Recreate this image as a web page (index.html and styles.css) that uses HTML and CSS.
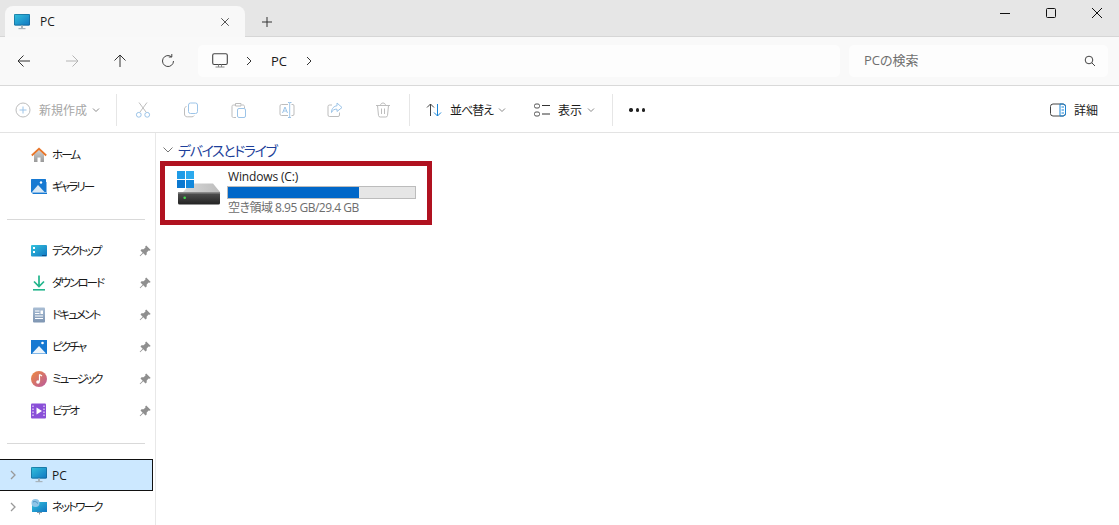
FILE: index.html
```html
<!DOCTYPE html>
<html lang="ja">
<head>
<meta charset="utf-8">
<title>PC</title>
<link rel="stylesheet" href="styles.css">
</head>
<body>
<svg class="defs" width="0" height="0" aria-hidden="true">
  <defs>
    <linearGradient id="scr" x1="0" y1="0" x2="1" y2="1"><stop offset="0" stop-color="#35c3dc"/><stop offset="1" stop-color="#0f75c2"/></linearGradient>
    <linearGradient id="drv" x1="0" y1="0" x2="0" y2="1"><stop offset="0" stop-color="#555"/><stop offset="1" stop-color="#222"/></linearGradient>
    <linearGradient id="drt" x1="0" y1="0" x2="1" y2="0"><stop offset="0" stop-color="#d8d8d8"/><stop offset="1" stop-color="#bdbdbd"/></linearGradient>
    <linearGradient id="mus" x1="0" y1="0" x2="1" y2="1"><stop offset="0" stop-color="#f08a3c"/><stop offset="1" stop-color="#b85aa0"/></linearGradient>
    <linearGradient id="hom" x1="0" y1="0" x2="0" y2="1"><stop offset="0" stop-color="#cfcfcf"/><stop offset="1" stop-color="#9a9a9a"/></linearGradient>
    <linearGradient id="doc" x1="0" y1="0" x2="0" y2="1"><stop offset="0" stop-color="#a9bdd4"/><stop offset="1" stop-color="#7e95b2"/></linearGradient>
    <symbol id="pc" viewBox="0 0 16 16"><rect x="0" y="0" width="16" height="11.5" rx="1" fill="url(#scr)"/><rect x="0.4" y="0.4" width="15.2" height="10.7" rx="1" fill="none" stroke="#15638f" stroke-width=".7"/><rect x="7" y="11.5" width="2" height="2.5" fill="#a8b4bc"/><rect x="4.5" y="14" width="7" height="1.2" fill="#a8b4bc"/></symbol>
    <symbol id="pin" viewBox="0 0 12 12"><path d="M7.2 .5 11.700 5 10.500 5.800 9.600 5.500 7.700 7.400 7.700 9.500 6.500 10.500 4.300 8.300 1.200 11.300.7 10.800 3.700 7.700 1.500 5.500 2.500 4.300 4.600 4.300 6.500 2.400 6.200 1.500Z" fill="#8f8f8f"/></symbol>
    <symbol id="chev" viewBox="0 0 8 8"><path d="M1 2.500 4 5.500 7 2.500" fill="none" stroke="currentColor" stroke-width="1"/></symbol>
  </defs>
</svg>
<div class="window">
  <header class="titlebar">
    <div class="tab">
      <svg class="i16" viewBox="0 0 16 16"><use href="#pc"/></svg>
      <span class="tab-label">PC</span>
      <svg class="tab-close" viewBox="0 0 12 12"><path d="M1.500 1.500 10.500 10.500M10.500 1.500 1.500 10.500" stroke="#333" fill="none"/></svg>
    </div>
    <div class="newtab"><svg class="i12" viewBox="0 0 12 12"><path d="M6 1V11M1 6H11" stroke="#333" fill="none"/></svg></div>
    <div class="winctl">
      <div class="winbtn"><svg class="i12" viewBox="0 0 12 12"><path d="M1 6.500H11" stroke="#111" fill="none"/></svg></div>
      <div class="winbtn"><svg class="i12" viewBox="0 0 12 12"><rect x="1.500" y="1.500" width="9" height="9" rx="1" stroke="#111" fill="none"/></svg></div>
      <div class="winbtn"><svg class="i12" viewBox="0 0 12 12"><path d="M1 1 11 11M11 1 1 11" stroke="#111" fill="none"/></svg></div>
    </div>
  </header>

  <nav class="navbar">
    <div class="navbtn"><svg class="i16" viewBox="0 0 16 16"><path d="M14 8H2M7.500 2.500 2 8l5.500 5.500" stroke="#333" fill="none"/></svg></div>
    <div class="navbtn"><svg class="i16" viewBox="0 0 16 16"><path d="M2 8H14M8.500 2.500 14 8l-5.500 5.500" stroke="#b5b5b5" fill="none"/></svg></div>
    <div class="navbtn"><svg class="i16" viewBox="0 0 16 16"><path d="M8 14V2M2.500 7.500 8 2l5.500 5.500" stroke="#333" fill="none"/></svg></div>
    <div class="navbtn"><svg class="i16" viewBox="0 0 16 16"><path d="M13.500 8A5.500 5.500 0 1 1 11.500 3.800M11.800 1v3h-3" stroke="#444" fill="none"/></svg></div>
    <div class="address">
      <svg class="addr-pc" viewBox="0 0 16 16"><rect x=".7" y=".7" width="14.600" height="10.800" rx="1.500" stroke="#444" fill="none" stroke-width="1.100"/><path d="M3.500 14H12.500M6.500 11.500V14M9.500 11.500V14" stroke="#888" fill="none"/></svg>
      <svg class="crumb first" viewBox="0 0 6 10"><path d="M1 1 5 5 1 9" stroke="#333" fill="none"/></svg>
      <span class="addr-text">PC</span>
      <svg class="crumb" viewBox="0 0 6 10"><path d="M1 1 5 5 1 9" stroke="#333" fill="none"/></svg>
    </div>
    <div class="search">
      <span class="search-text">PCの検索</span>
      <svg class="i12" viewBox="0 0 12 12"><circle cx="5" cy="5" r="3.800" stroke="#444" fill="none"/><path d="M7.800 7.800 11 11" stroke="#444" fill="none"/></svg>
    </div>
  </nav>

  <div class="toolbar">
    <div class="tb-new">
      <svg class="i16" viewBox="0 0 16 16"><circle cx="8" cy="8" r="7" stroke="#bdbdbd" fill="none"/><path d="M8 4.500V11.500M4.500 8H11.500" stroke="#9cc4e8" fill="none"/></svg>
      <span class="tb-label dim">新規作成</span>
      <svg class="chev dim" viewBox="0 0 8 8"><use href="#chev"/></svg>
    </div>
    <div class="sep first"></div>
    <div class="tb-icon"><svg class="i16" viewBox="0 0 16 16"><path d="M4 .5 11 10M12 .5 5 10" stroke="#bdbdbd" fill="none"/><circle cx="3.800" cy="12.800" r="2.400" stroke="#9cc4e8" fill="none"/><circle cx="12.200" cy="12.800" r="2.400" stroke="#9cc4e8" fill="none"/></svg></div>
    <div class="tb-icon"><svg class="i16" viewBox="0 0 16 16"><rect x="5.500" y="1" width="9" height="10.500" rx="2" stroke="#9cc4e8" fill="none"/><path d="M3.500 4.500C2 5 1.500 5.800 1.500 7v5c0 1.800 1 2.800 2.800 2.800H9c1 0 1.800-.5 2.200-1.300" stroke="#bdbdbd" fill="none"/></svg></div>
    <div class="tb-icon"><svg class="i16" viewBox="0 0 16 16"><path d="M4 3H2.500C1.500 3 1 3.500 1 4.500V14c0 1 .5 1.500 1.500 1.500H5M10.500 3H12c.8 0 1.500.5 1.500 1.500V6M4.500 1.500h5.500V4H4.500z" stroke="#bdbdbd" fill="none"/><rect x="6.500" y="6.500" width="8" height="9" rx="1.500" stroke="#9cc4e8" fill="none"/></svg></div>
    <div class="tb-icon"><svg class="i16" viewBox="0 0 16 16"><path d="M9 2.500H2.500Q1 2.500 1 4V12Q1 13.500 2.500 13.500H9M12.500 2.500H14Q15 2.500 15 4V12Q15 13.500 14 13.500H12.500" stroke="#bdbdbd" fill="none"/><path d="M9 .5h1.500M10.700 .5V15.500M9 15.500h3M10.700 .5H12.500" stroke="#9cc4e8" fill="none"/><path d="M3.500 11 6 5 8.500 11M4.500 9H7.500" stroke="#9cc4e8" fill="none"/></svg></div>
    <div class="tb-icon"><svg class="i16" viewBox="0 0 16 16"><path d="M5 3H2.500Q1 3 1 4.500V13Q1 14.500 2.500 14.500H11Q12.500 14.500 12.500 13V10.500" stroke="#bdbdbd" fill="none"/><path d="M10 1 15 5.500 10 9.500V7.200C7.500 7 5.500 8 4.500 10.500 4.500 6.500 7 4 10 3.800Z" stroke="#9cc4e8" fill="none"/></svg></div>
    <div class="tb-icon"><svg class="i16" viewBox="0 0 16 16"><path d="M1 3.500H15M5.500 3.500C5.500 2 6.500 1 8 1s2.500 1 2.500 2.500M2.500 3.500 3.500 13.500Q3.700 15 5.200 15H10.800Q12.300 15 12.500 13.500L13.500 3.500M6.500 6.500V12M9.500 6.500V12" stroke="#bdbdbd" fill="none"/></svg></div>
    <div class="sep near"></div>
    <div class="tb-item sort">
      <svg class="i16" viewBox="0 0 16 16"><path d="M4.500 14V2M1 5.500 4.500 2 8 5.500" stroke="#444" fill="none"/><path d="M11.500 2V14M8 10.500 11.500 14 15 10.500" stroke="#1a86d8" fill="none"/></svg>
      <span class="tb-label tight">並べ替え</span>
      <svg class="chev" viewBox="0 0 8 8"><use href="#chev"/></svg>
    </div>
    <div class="tb-item view">
      <svg class="i16" viewBox="0 0 16 16"><rect x=".5" y="2" width="5" height="4" rx="1.500" stroke="#555" fill="none"/><rect x=".5" y="10" width="5" height="4" rx="1.500" stroke="#555" fill="none"/><path d="M8 3.500H16M8 12H16" stroke="#333" fill="none"/></svg>
      <span class="tb-label">表示</span>
      <svg class="chev" viewBox="0 0 8 8"><use href="#chev"/></svg>
    </div>
    <div class="sep"></div>
    <div class="dots"><span></span><span></span><span></span></div>
    <div class="tb-item details">
      <svg class="i16" viewBox="0 0 16 16"><rect x=".5" y="2" width="15" height="12" rx="2.500" stroke="#444" fill="none"/><path d="M10 2H13Q15.500 2 15.500 4.500V11.500Q15.500 14 13 14H10ZM11.500 5H14M11.500 8H14M11.500 11H14" stroke="#1a86d8" fill="none"/></svg>
      <span class="tb-label">詳細</span>
    </div>
  </div>

  <div class="body">
    <aside class="sidebar">
      <div class="row"><span class="slot"></span><svg class="i16" viewBox="0 0 16 16"><path d="M3 7.500V15H6.500V10.500H9.500V15H13V7.500L8 3Z" fill="url(#hom)"/><path d="M.8 8.500 8 1.800 15.200 8.500" stroke="#e8762a" stroke-width="1.800" fill="none"/></svg><span class="row-label">ホーム</span></div>
      <div class="row"><span class="slot"></span><svg class="i16" viewBox="0 0 16 16"><rect width="15" height="13.500" rx=".5" fill="#1679d2"/><path d="M1 13 7 6 13.500 13Z" fill="#dbe9f5"/><circle cx="10" cy="3.500" r="1.200" fill="#fff"/><path d="M1.500 14.500H16V3" stroke="#1679d2" fill="none"/></svg><span class="row-label">ギャラリー</span></div>
      <div class="divider"></div>
      <div class="row"><span class="slot"></span><svg class="i16" viewBox="0 0 16 16"><rect y="2" width="16" height="11.500" rx="1" fill="url(#scr)"/><rect x="2" y="4" width="2" height="2" fill="#fff"/><rect x="2" y="8" width="2" height="2" fill="#fff"/><path d="M11 12.500H15" stroke="#0c4f86"/></svg><span class="row-label">デスクトップ</span><svg class="pin" viewBox="0 0 12 12"><use href="#pin"/></svg></div>
      <div class="row"><span class="slot"></span><svg class="i16" viewBox="0 0 16 16"><path d="M8 .5V11M3 6.500 8 11.500 13 6.500" stroke="#22b58c" stroke-width="1.700" fill="none"/><path d="M2 14.800H14" stroke="#22b58c" stroke-width="1.600"/></svg><span class="row-label">ダウンロード</span><svg class="pin" viewBox="0 0 12 12"><use href="#pin"/></svg></div>
      <div class="row"><span class="slot"></span><svg class="i16" viewBox="0 0 16 16"><rect x="2" y=".5" width="12" height="15" rx="1" fill="url(#doc)"/><path d="M4 4H8.500M4 6.500H8.500M4 9H12M4 11.500H12" stroke="#fff"/><rect x="9.500" y="3.500" width="2.500" height="3.500" fill="#fff"/></svg><span class="row-label">ドキュメント</span><svg class="pin" viewBox="0 0 12 12"><use href="#pin"/></svg></div>
      <div class="row"><span class="slot"></span><svg class="i16" viewBox="0 0 16 16"><rect y="1" width="16" height="14" fill="#1679d2"/><path d="M1 14.500 8 7 15 14.500Z" fill="#eef5fb"/><circle cx="11.500" cy="4" r="1.300" fill="#fff"/></svg><span class="row-label">ピクチャ</span><svg class="pin" viewBox="0 0 12 12"><use href="#pin"/></svg></div>
      <div class="row"><span class="slot"></span><svg class="i16" viewBox="0 0 16 16"><circle cx="8" cy="8" r="8" fill="url(#mus)"/><path d="M8.500 3.500V10.500" stroke="#fff" stroke-width="1.200"/><circle cx="7" cy="11" r="1.800" fill="#fff"/><path d="M8.500 3.500 11 5" stroke="#fff" stroke-width="1.200"/></svg><span class="row-label">ミュージック</span><svg class="pin" viewBox="0 0 12 12"><use href="#pin"/></svg></div>
      <div class="row"><span class="slot"></span><svg class="i16" viewBox="0 0 16 16"><rect width="15" height="15" y=".5" rx="1" fill="#8a4fd8"/><path d="M5.500 4.500 11 8 5.500 11.500Z" fill="#fff"/><path d="M2 2.500V13.500M13 2.500V13.500" stroke="#d8c4f4" stroke-width="1.500" stroke-dasharray="1.500 1.500"/></svg><span class="row-label">ビデオ</span><svg class="pin" viewBox="0 0 12 12"><use href="#pin"/></svg></div>
      <div class="divider"></div>
      <div class="row selected"><span class="slot"><svg class="expander" viewBox="0 0 6 10"><path d="M1 1 5 5 1 9" stroke="#999" stroke-width="1.300" fill="none"/></svg></span><svg class="i16" viewBox="0 0 16 16"><use href="#pc"/></svg><span class="row-label latin">PC</span></div>
      <div class="row"><span class="slot"><svg class="expander" viewBox="0 0 6 10"><path d="M1 1 5 5 1 9" stroke="#999" stroke-width="1.300" fill="none"/></svg></span><svg class="i16" viewBox="0 0 16 16"><rect x="1" y="3" width="15" height="10" fill="url(#scr)"/><path d="M6 13.500H11M8.500 13V15.500" stroke="#8a9aa6"/><circle cx="4.500" cy="4" r="4" fill="#8fc6e8"/><path d="M2 3C4 2 5 2.500 7 4.500" stroke="#4a8fbf" fill="none"/></svg><span class="row-label">ネットワーク</span></div>
    </aside>

    <main class="content">
      <div class="group-head">
        <svg class="group-chev" viewBox="0 0 10 6"><path d="M.5 .5 5 5 9.500 .5" stroke="#777" fill="none"/></svg>
        <h2 class="group-title">デバイスとドライブ</h2>
      </div>
      <div class="drive">
        <svg class="drive-icon" viewBox="0 0 44 36">
          <path d="M6 22 14 13.500H36L43 22Z" fill="url(#drt)"/>
          <rect x="1" y="22" width="42" height="12.500" rx="1.500" fill="url(#drv)"/>
          <rect x="1" y="22" width="42" height="1.500" fill="#8a8a8a"/>
          <circle cx="7.700" cy="27.700" r="1.300" fill="#3fdc4a"/>
          <rect x="0" y="1" width="8" height="8" fill="#1e9be6"/>
          <rect x="9" y="1" width="8" height="8" fill="#2caaee"/>
          <rect x="0" y="10" width="8" height="8" fill="#0b78d0"/>
          <rect x="9" y="10" width="8" height="8" fill="#1288dc"/>
        </svg>
        <div class="drive-info">
          <div class="drive-name">Windows (C:)</div>
          <div class="meter"><div class="meter-fill"></div></div>
          <div class="drive-free">空き領域 8.95 GB/29.4 GB</div>
        </div>
      </div>
    </main>
  </div>
</div>
</body>
</html>
```
FILE: styles.css
```css
* { box-sizing: border-box; }
html, body { margin: 0; height: 100%; overflow: hidden; background: #fff; }
body {
  font-family: "Open Sans", "Noto Sans CJK JP", sans-serif;
  font-size: 12px;
  font-feature-settings: "palt";
  color: #1a1a1a;
}
svg { display: block; flex: none; }
.defs { position: absolute; }
.i16 { width: 16px; height: 16px; }
.i12 { width: 12px; height: 12px; }
.window { display: flex; flex-direction: column; height: 525px; }

.titlebar {
  display: flex;
  height: 37px;
  flex: none;
  background: #e6e6e6;
  border-bottom: 1px solid #d6d6d6;
  padding-left: 5px;
}
.tab {
  width: 240px;
  height: 31px;
  margin-top: 6px;
  background: #f8f8f8;
  border-radius: 8px 8px 0 0;
  display: flex;
  align-items: center;
  padding: 0 15px 0 9px;
  margin-bottom: -1px;
}
.tab-label { margin-left: 10px; font-size: 12px; flex: 1; }
.tab-close { width: 10px; height: 10px; }
.newtab { width: 44px; height: 31px; margin-top: 6px; display: flex; align-items: center; justify-content: center; }
.winctl { display: flex; margin-left: auto; margin-right: -1px; height: 25px; }
.winbtn { width: 46px; height: 25px; display: flex; align-items: center; justify-content: center; }

.navbar {
  display: flex;
  align-items: center;
  height: 49px;
  flex: none;
  background: #f9f9f9;
  border-bottom: 1px solid #d9d9d9;
  padding: 0 11px 0 0;
}
.navbtn { width: 48px; height: 32px; display: flex; align-items: center; justify-content: center; }
.address {
  flex: 1;
  height: 32px;
  margin-left: 6px;
  background: #fdfdfd;
  border-radius: 5px;
  display: flex;
  align-items: center;
  padding-left: 14px;
}
.addr-pc { width: 16px; height: 16px; }
.crumb { width: 6px; height: 10px; }
.crumb.first { margin-left: 18px; }
.addr-text { margin: 0 19px 0 19px; font-size: 13px; }
.search {
  width: 259px;
  height: 32px;
  margin-left: 9px;
  background: #fdfdfd;
  border-radius: 5px;
  display: flex;
  align-items: center;
  justify-content: space-between;
  padding: 0 12px 0 15px;
}
.search-text { color: #6f6f6f; font-size: 13px; line-height: 16px; margin-top: -2px; }

.toolbar {
  display: flex;
  align-items: center;
  height: 47px;
  flex: none;
  background: #fff;
  border-bottom: 1px solid #e3e3e3;
  padding-top: 2px;
}
.tb-new { width: 116px; display: flex; align-items: center; padding-left: 15px; }
.tb-label { margin-left: 8px; }
.tb-label.tight { letter-spacing: -1px; }
.dim { color: #a6a6a6; }
.chev { width: 8px; height: 8px; margin-left: 5px; color: #8a8a8a; }
.sep { width: 1px; height: 32px; background: #e6e6e6; flex: none; }
.sep.first { margin-right: 2px; }
.sep.near { margin-left: 2px; }
.tb-icon { width: 48px; display: flex; justify-content: center; }
.tb-item { display: flex; align-items: center; }
.sort { margin-left: 16px; }
.view { margin-left: 28px; margin-right: 17px; }
.dots { display: flex; gap: 3px; margin-left: 16px; }
.dots span { width: 3.4px; height: 3.4px; border-radius: 50%; background: #222; }
.details { margin-left: auto; margin-right: 21px; }

.body { flex: 1; display: flex; min-height: 0; }
.sidebar {
  width: 156px;
  flex: none;
  border-right: 1px solid #e8e8e8;
  padding-top: 6px;
}
.row { display: flex; align-items: center; height: 32px; padding-right: 4px; }
.slot { width: 31px; flex: none; }
.expander { width: 6px; height: 10px; margin-left: 10px; }
.row-label { margin: 0 0 2px 5px; font-size: 11.5px; letter-spacing: -1.9px; }
.row-label.latin { font-size: 12px; letter-spacing: 0; margin-bottom: 0; }
.pin { width: 12px; height: 12px; margin-left: auto; }
.divider { height: 32px; display: flex; align-items: center; margin: 0 10px 0 7px; }
.divider::before { content: ""; flex: 1; height: 1px; background: #d9d9d9; }
.selected {
  width: 153px;
  background: #cce8ff;
  border: 1px solid #111;
  border-left: 0;
}

.content { flex: 1; padding: 8px 0 0 4px; }
.group-head { display: flex; align-items: center; height: 17px; padding-left: 3px; }
.group-chev { width: 10px; height: 6px; }
.group-title { margin: 0 0 0 5px; font-size: 14px; font-weight: 400; color: #1d3f9a; letter-spacing: -1.4px; }
.drive {
  width: 272px;
  height: 64px;
  margin-top: 3px;
  border: 5px solid #b01220;
  display: flex;
  padding: 4px 11px 0 12px;
}
.drive-icon { width: 44px; height: 36px; }
.drive-info { margin-left: 6px; flex: 1; }
.drive-name { line-height: 14px; margin-left: 1px; color: #222; letter-spacing: -.15px; }
.meter { height: 13px; background: #e6e6e6; border: 1px solid #bcbcbc; margin-top: 2px; }
.meter-fill { width: 70%; height: 100%; background: #0067c8; }
.drive-free { color: #6d6d6d; line-height: 14px; margin: 2px 0 0 1px; letter-spacing: -.5px; }
```
